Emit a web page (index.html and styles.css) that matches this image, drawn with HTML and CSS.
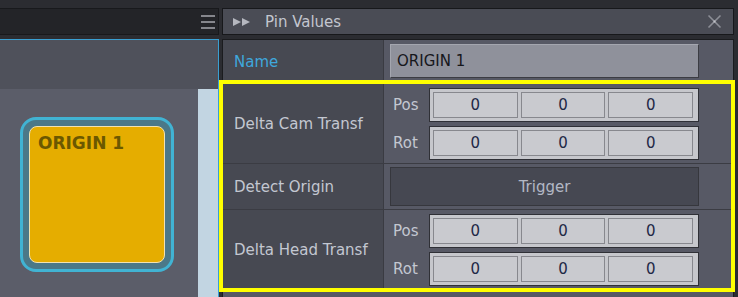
FILE: index.html
```html
<!DOCTYPE html>
<html lang="en">
<head>
    <meta charset="UTF-8">
    <title>Pin Values</title>
    <link rel="stylesheet" href="styles.css">
</head>
<body>
    <div class="screen">
        <div class="left">
            <div class="toolbar">
                <span class="menu"><i></i><i></i><i></i></span>
            </div>
            <div class="canvas">
                <div class="canvas-head"></div>
                <div class="canvas-body">
                    <div class="graph">
                        <div class="node">
                            <div class="node-face">ORIGIN 1</div>
                        </div>
                    </div>
                    <div class="strip"></div>
                </div>
            </div>
        </div>

        <div class="right">
            <div class="panel-head">
                <svg class="collapse" width="18" height="8" viewBox="0 0 18 8">
                    <polygon points="0,0 8,4 0,8" fill="#b5b7bf"/>
                    <polygon points="9,0 17,4 9,8" fill="#b5b7bf"/>
                </svg>
                <span class="title">Pin Values</span>
                <svg class="close" width="15" height="15" viewBox="0 0 15 15">
                    <path d="M1.5 1.5 L13.5 13.5 M13.5 1.5 L1.5 13.5" stroke="#8c8e96" stroke-width="1.6"/>
                    <rect x="6.5" y="6.5" width="2" height="2" fill="#c4c6cc"/>
                </svg>
            </div>

            <div class="props">
                <div class="row row-name">
                    <div class="label name">Name</div>
                    <div class="value">
                        <div class="text-input">ORIGIN 1</div>
                    </div>
                </div>

                <div class="row row-vec">
                    <div class="label">Delta Cam Transf</div>
                    <div class="value">
                        <div class="vec-line">
                            <span class="axis">Pos</span>
                            <div class="vec"><span>0</span><span>0</span><span>0</span></div>
                        </div>
                        <div class="vec-line">
                            <span class="axis">Rot</span>
                            <div class="vec"><span>0</span><span>0</span><span>0</span></div>
                        </div>
                    </div>
                </div>

                <div class="row row-trigger">
                    <div class="label">Detect Origin</div>
                    <div class="value">
                        <div class="trigger">Trigger</div>
                    </div>
                </div>

                <div class="row row-vec">
                    <div class="label">Delta Head Transf</div>
                    <div class="value">
                        <div class="vec-line">
                            <span class="axis">Pos</span>
                            <div class="vec"><span>0</span><span>0</span><span>0</span></div>
                        </div>
                        <div class="vec-line">
                            <span class="axis">Rot</span>
                            <div class="vec"><span>0</span><span>0</span><span>0</span></div>
                        </div>
                    </div>
                </div>
            </div>
        </div>

        <div class="highlight"></div>
    </div>
</body>
</html>
```

FILE: styles.css
```css
body {
    margin: 0;
    background: #2b2c31;
    font-family: "DejaVu Sans", sans-serif;
    font-size: 15px;
    overflow: hidden;
}
.screen {
    position: relative;
    display: flex;
    gap: 3px;
    width: 738px;
    height: 297px;
    padding-top: 8px;
    box-sizing: border-box;
}

/* left side: graph editor */
.left {
    width: 219px;
    display: flex;
    flex-direction: column;
    gap: 4px;
}
.toolbar {
    height: 27px;
    box-sizing: border-box;
    border: 1px solid #18191c;
    border-left: 0;
    background: #232428;
    display: flex;
    justify-content: flex-end;
    align-items: center;
    padding-right: 3px;
}
.menu {
    display: flex;
    flex-direction: column;
    gap: 4px;
}
.menu i {
    display: block;
    width: 14px;
    height: 2px;
    background: #85868c;
}
.canvas {
    flex: 1;
    display: flex;
    flex-direction: column;
    border-top: 1px solid #3a9fd2;
    border-right: 1px solid #3a9fd2;
}
.canvas-head {
    height: 49px;
    background: #4f515b;
}
.canvas-body {
    flex: 1;
    display: flex;
}
.graph {
    flex: 1;
    background: #5b5d69;
}
.strip {
    width: 20px;
    background: #c2d5e2;
}
.node {
    width: 154px;
    height: 155px;
    margin: 28px 0 0 20px;
    box-sizing: border-box;
    border: 3px solid #41b3d3;
    border-radius: 16px;
    background: #4b7888;
    padding: 6px;
}
.node-face {
    height: 100%;
    box-sizing: border-box;
    border: 1px solid #f1e2b2;
    border-radius: 8px;
    background: #e5ad00;
    color: #6b5800;
    font-weight: bold;
    font-size: 17px;
    padding: 6px 8px;
}

/* right side: pin values panel */
.right {
    width: 512px;
    display: flex;
    flex-direction: column;
    gap: 4px;
}
.panel-head {
    height: 27px;
    box-sizing: border-box;
    border: 1px solid #17181b;
    background: #4a4c55;
    display: flex;
    align-items: center;
    padding: 0 11px 0 10px;
    color: #c3c6cf;
}
.collapse {
    margin-top: 1px;
}
.title {
    margin-left: 14px;
    flex: 1;
}
.props {
    flex: 1;
    border: 1px solid #1b1c1f;
    border-bottom: 0;
    background: #575965;
}
.row {
    display: flex;
    border-bottom: 1px solid #3b3c43;
}
.row-name {
    height: 43px;
}
.row-vec {
    height: 79px;
}
.row-trigger {
    height: 45px;
}
.label {
    width: 161px;
    box-sizing: border-box;
    border-right: 1px solid #3a3b42;
    background: #474952;
    color: #c3c7d1;
    padding-left: 11px;
    display: flex;
    align-items: center;
}
.label.name {
    color: #3fa7dc;
}
.value {
    flex: 1;
    padding: 4px 0 0 6px;
    display: flex;
    flex-direction: column;
    gap: 4px;
}
.row-trigger .value {
    padding-top: 3px;
}
.text-input {
    width: 309px;
    height: 34px;
    box-sizing: border-box;
    background: #8f919b;
    border: 1px solid;
    border-color: #a4a6af #3c3d43 #3c3d43 #a4a6af;
    color: #16171b;
    padding-left: 6px;
    display: flex;
    align-items: center;
}
.vec-line {
    display: flex;
    align-items: center;
    width: 309px;
}
.axis {
    width: 39px;
    box-sizing: border-box;
    padding-left: 3px;
    color: #c3c7d1;
}
.vec {
    width: 270px;
    height: 34px;
    box-sizing: border-box;
    border: 1px solid #2f3036;
    background: #c6c7cc;
    padding: 3px 5px 3px 3px;
    display: flex;
    gap: 3px;
}
.vec span {
    flex: 1;
    border: 1px solid #87888e;
    background: #c9cacf;
    color: #1e2846;
    text-align: center;
    line-height: 24px;
}
.trigger {
    width: 309px;
    height: 39px;
    box-sizing: border-box;
    background: #464852;
    border: 1px solid #36373d;
    color: #b3b8c5;
    display: flex;
    align-items: center;
    justify-content: center;
}

/* annotation frame drawn over the panel */
.highlight {
    position: absolute;
    left: 219px;
    top: 80px;
    width: 516px;
    height: 212px;
    box-sizing: border-box;
    border: 4px solid #ffff00;
}
```
